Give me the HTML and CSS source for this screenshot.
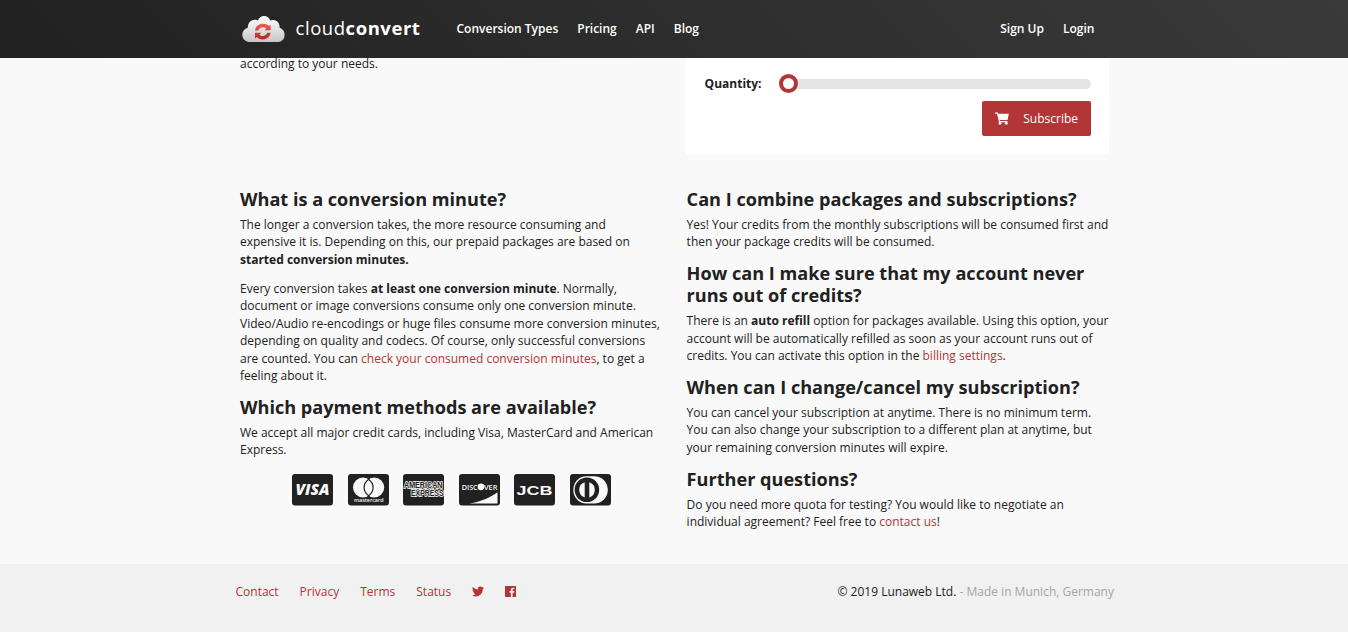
FILE: index.html
```html
<!DOCTYPE html>
<html lang="en">
<head>
<meta charset="utf-8">
<title>CloudConvert Pricing</title>
<link rel="stylesheet" href="styles.css">
</head>
<body>
<header class="topbar">
  <div class="brand">
    <svg class="cloud" width="43" height="28" viewBox="0 0 43 28">
      <defs>
        <linearGradient id="cg" x1="0" y1="0" x2="0" y2="1"><stop offset="0" stop-color="#fff"/><stop offset="1" stop-color="#c6c6c6"/></linearGradient>
        <linearGradient id="rg" x1="0" y1="8" x2="0" y2="25" gradientUnits="userSpaceOnUse"><stop offset="0" stop-color="#ef6058"/><stop offset="1" stop-color="#b32424"/></linearGradient>
      </defs>
      <path fill="url(#cg)" d="M6.500 27C2.800 26.500.3 23.500.3 19.600c0-3.400 2.200-5.800 5.500-6.800C5.600 8 9 4.300 13.500 4.700c.8 0 1.700.3 2.400.8C17 2.500 19.200 1 22 1c3 0 5.400 1.900 6.200 4.600 1-.5 2-.7 3-.7 4 0 6.800 3.500 6.400 7.900 3 1 5 3.600 5 6.900 0 4-2.500 6.800-6 7.300z"/>
      <path fill="url(#rg)" d="M13 15.400C13.600 11.400 16.800 8.800 21 8.800c2.400 0 4.400.8 5.900 2.300l1.700-1.300v5.500h-6.300l2-2c-.8-.7-1.900-1.100-3.200-1.100-2.300 0-4 1.200-4.600 3.200zM13 17.800h6.300l-2 2c.8.800 2 1.200 3.300 1.200 2.300 0 4-1.200 4.600-3.200h3.400c-.6 4-3.800 6.600-8 6.600-2.400 0-4.400-.8-5.900-2.300L13 23.400z"/>
    </svg>
    <span class="wordmark">cloud<b>convert</b></span>
  </div>
  <nav class="mainnav"><a>Conversion Types</a><a>Pricing</a><a>API</a><a>Blog</a></nav>
  <nav class="usernav"><a>Sign Up</a><a>Login</a></nav>
</header>
<main class="content">
  <section class="plans">
    <p class="needs">according to your needs.</p>
    <div class="panel">
      <div class="quantity">
        <b>Quantity:</b>
        <div class="slider"><div class="knob"></div></div>
      </div>
      <button class="subscribe">
        <svg width="14" height="13" viewBox="0 0 14 13"><path fill="#fff" d="M0 .4h2.800l.4 1.400h10.600l-1.300 6.100H4.700l.3 1.200h7.400v1.200H4L2 1.700H0z"/><circle fill="#fff" cx="5" cy="11.300" r="1.400"/><circle fill="#fff" cx="11.300" cy="11.300" r="1.400"/></svg>
        <span>Subscribe</span>
      </button>
    </div>
  </section>
  <section class="faq">
    <div class="col">
      <h3><span>What is a conversion minute?</span></h3>
      <p>The longer a conversion takes, the more resource consuming and<br>expensive it is. Depending on this, our prepaid packages are based on<br><b>started conversion minutes.</b></p>
      <p>Every conversion takes <b>at least one conversion minute</b>. Normally,<br>document or image conversions consume only one conversion minute.<br>Video/Audio re-encodings or huge files consume more conversion minutes,<br>depending on quality and codecs. Of course, only successful conversions<br>are counted. You can <a>check your consumed conversion minutes</a>, to get a<br>feeling about it.</p>
      <h3>Which payment methods are available?</h3>
      <p>We accept all major credit cards, including Visa, MasterCard and American<br>Express.</p>
      <div class="cards">
        <svg width="42" height="32" viewBox="0 0 42 32"><rect class="ink" width="41" height="31.500" rx="3"/><text class="visa" x="3.500" y="21.300" textLength="34" lengthAdjust="spacingAndGlyphs">VISA</text></svg>
        <svg width="42" height="32" viewBox="0 0 42 32"><rect class="ink" width="41" height="31.500" rx="3"/><circle class="paper" cx="15" cy="13.500" r="10"/><circle class="paper" cx="26.200" cy="13.500" r="10"/><path fill="none" stroke="#212121" stroke-width="1.200" d="M20.600 5.300c-6 4.500-6 12 0 16.400 6-4.400 6-11.900 0-16.400z"/><text class="mc" x="6" y="28.200" textLength="29.500" lengthAdjust="spacingAndGlyphs">mastercard</text></svg>
        <svg class="wide" width="42" height="32" viewBox="0 0 42 32"><rect class="ink" width="41" height="31.500" rx="3"/><text class="amex" x="1" y="14" textLength="38.500" lengthAdjust="spacingAndGlyphs">AMERICAN</text><text class="amex" x="8" y="22" textLength="32.500" lengthAdjust="spacingAndGlyphs">EXPRESS</text></svg>
        <svg width="42" height="32" viewBox="0 0 42 32"><rect class="ink" width="41" height="31.500" rx="3"/><text class="disc" x="2.700" y="15.500" textLength="16" lengthAdjust="spacingAndGlyphs">DISC</text><circle class="paper" cx="22" cy="12.800" r="3.400"/><text class="disc" x="25" y="15.500" textLength="13.500" lengthAdjust="spacingAndGlyphs">VER</text><path class="paper" d="M10.500 29.500C22 27.500 31 23.500 38.500 18.200v11.300z"/></svg>
        <svg width="42" height="32" viewBox="0 0 42 32"><rect class="ink" width="41" height="31.500" rx="3"/><text class="jcb" x="2.500" y="20.600" textLength="36" lengthAdjust="spacingAndGlyphs">JCB</text></svg>
        <svg width="42" height="32" viewBox="0 0 42 32"><rect class="ink" width="41" height="31.500" rx="3"/><path class="paper" d="M16.500 2.200h7.500c8 0 13.800 6 13.800 13.700 0 7.500-6 13.500-13.800 13.500h-7.500C9 29.400 3.300 23.400 3.300 15.900 3.300 8.200 9 2.200 16.500 2.200z"/><circle class="ink" cx="16.900" cy="15.800" r="12.300"/><path class="paper" d="M14.700 8.200a8 8 0 0 0 0 15.200zM19.300 8.200a8 8 0 0 1 0 15.200z"/></svg>
      </div>
    </div>
    <div class="col">
      <h3>Can I combine packages and subscriptions?</h3>
      <p>Yes! Your credits from the monthly subscriptions will be consumed first and<br>then your package credits will be consumed.</p>
      <h3>How can I make sure that my account never<br>runs out of credits?</h3>
      <p>There is an <b>auto refill</b> option for packages available. Using this option, your<br>account will be automatically refilled as soon as your account runs out of<br>credits. You can activate this option in the <a>billing settings</a>.</p>
      <h3>When can I change/cancel my subscription?</h3>
      <p>You can cancel your subscription at anytime. There is no minimum term.<br>You can also change your subscription to a different plan at anytime, but<br>your remaining conversion minutes will expire.</p>
      <h3>Further questions?</h3>
      <p>Do you need more quota for testing? You would like to negotiate an<br>individual agreement? Feel free to <a>contact us</a>!</p>
    </div>
  </section>
</main>
<footer class="footer">
  <nav class="links">
    <a>Contact</a><a>Privacy</a><a>Terms</a><a>Status</a>
    <svg class="tw" width="12" height="11" viewBox="0 0 24 20"><path fill="#b33535" d="M24 2.400a10 10 0 0 1-2.800.8A5 5 0 0 0 23.300.5a10 10 0 0 1-3.100 1.200 4.900 4.900 0 0 0-8.400 4.500A14 14 0 0 1 1.700 1a4.900 4.900 0 0 0 1.500 6.600A5 5 0 0 1 1 7a4.900 4.900 0 0 0 3.900 4.900 5 5 0 0 1-2.200.1 4.900 4.900 0 0 0 4.600 3.400A9.900 9.900 0 0 1 0 17.500 14 14 0 0 0 21.500 5a10 10 0 0 0 2.500-2.600z"/></svg>
    <svg class="fb" width="11" height="11" viewBox="0 0 11 11"><path fill="#b33535" fill-rule="evenodd" d="M.6 0h9.800q.6 0 .6.600v9.800q0 .6-.6.600H7.600V6.800h1.500l.2-1.700H7.600V4c0-.5.1-.8.800-.8h1V1.700H8C6.500 1.700 5.900 2.500 5.900 3.800v1.300H4.500v1.700h1.400V11H.6q-.6 0-.6-.6V.6Q0 0 .6 0z"/></svg>
  </nav>
  <div class="legal"><span>© 2019 Lunaweb Ltd.</span> - Made in Munich, Germany</div>
</footer>
</body>
</html>
```
FILE: styles.css
```css
* { box-sizing: border-box; }
body {
  margin: 0;
  height: 632px;
  overflow: hidden;
  display: flex;
  flex-direction: column;
  background: #f9f9f9;
  color: #212121;
  font-family: "Open Sans", sans-serif;
  font-size: 12.015px;
  line-height: 17.5px;
  white-space: nowrap;
}
a { color: #b33535; }
b { font-weight: 700; }
.topbar {
  height: 58px;
  flex: none;
  display: flex;
  align-items: center;
  padding: 0 253.600px 0 241.500px;
  background: linear-gradient(45deg, #212121, #3a3a3a);
  color: #fff;
}
.brand { display: flex; align-items: center; gap: 11px; width: 215px; }
.cloud { display: block; }
.wordmark { font-size: 18.500px; line-height: 26px; letter-spacing: .55px; margin-top: -2px; }
.mainnav, .usernav { display: flex; gap: 19px; font-weight: 600; }
.mainnav a, .usernav a { color: #fff; }
.usernav { margin-left: auto; }
.content { flex: none; height: 506px; padding: 0 239px 0 240px; }
.plans { display: flex; justify-content: space-between; height: 130px; }
.needs { margin: -3px 0 0; }
.panel { width: 423px; height: 96px; background: #fff; padding: 17px 18px 0; display: flex; flex-direction: column; }
.quantity { display: flex; align-items: center; justify-content: space-between; height: 18px; }
.quantity b { margin-left: .6px; }
.slider { width: 312px; height: 10px; border-radius: 5px; background: #e4e4e4; display: flex; align-items: center; }
.knob { width: 19px; height: 19px; flex: none; margin-top: -1px; border: 4px solid #b33535; border-radius: 50%; background: #fff; }
.subscribe {
  align-self: flex-end;
  display: flex;
  align-items: center;
  width: 109px;
  height: 35px;
  margin-top: 8px;
  padding: 0 13px;
  justify-content: space-between;
  border: 0;
  border-radius: 2px;
  background: #b33535;
  color: #fff;
  font: inherit;
}
.faq { display: grid; grid-template-columns: 423px 422.400px; justify-content: space-between; }
h3 { margin: 0 0 5.900px; font-size: 18.130px; line-height: 22px; font-weight: 700; }
p { margin: 0 0 11.400px; }
.faq p { line-height: 17.490px; }
.cards { display: flex; gap: 13.600px; margin: 14.700px 0 0 52px; }
.wide { overflow: visible; }
.ink { fill: #212121; }
.paper { fill: #f9f9f9; }
.cards text { fill: #f9f9f9; font-family: "Open Sans", sans-serif; font-weight: 700; }
.cards .visa { font-size: 16px; font-style: italic; font-weight: 800; }
.cards .mc { font-size: 6px; font-weight: 600; }
.cards .amex { font-family: "Liberation Sans", sans-serif; font-size: 8.500px; fill: #212121; stroke: #f9f9f9; stroke-width: 1.600px; paint-order: stroke; }
.cards .disc { font-size: 7.500px; font-weight: 600; }
.cards .jcb { font-family: "Liberation Sans", sans-serif; font-size: 13px; }
.footer {
  flex: 1;
  display: flex;
  justify-content: space-between;
  align-items: flex-start;
  padding: 19px 234px 0 235.500px;
  background: #f1f1f1;
}
.links { display: flex; align-items: center; gap: 21px; }
.legal { color: #a5a5a5; }
.legal span { color: #212121; }
```
